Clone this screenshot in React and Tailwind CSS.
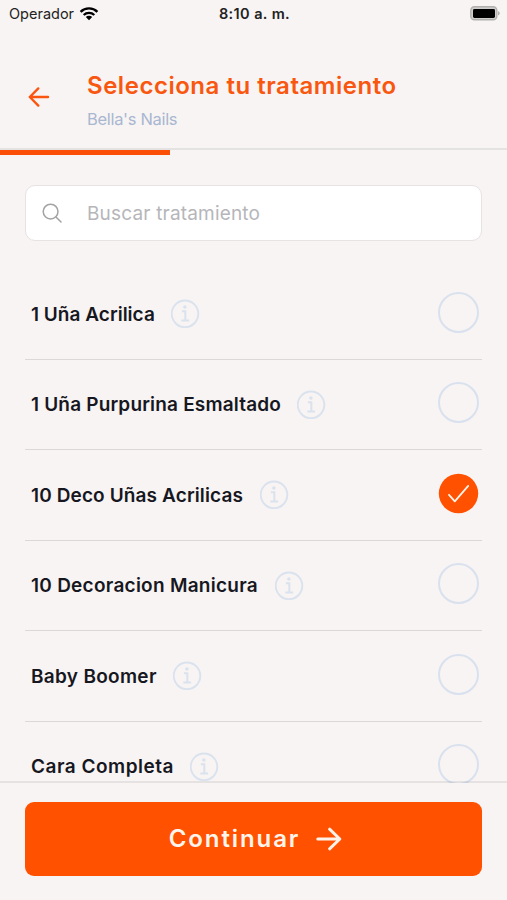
import { useState } from "react";

const TREATMENTS = [
  { name: "1 Uña Acrilica", width: "w-[124px]", tracking: "tracking-[0.02px]" },
  { name: "1 Uña Purpurina Esmaltado", width: "w-[250px]", tracking: "tracking-[0.18px]" },
  { name: "10 Deco Uñas Acrilicas", width: "w-[213px]", tracking: "tracking-[0.12px]" },
  { name: "10 Decoracion Manicura", width: "w-[228px]", tracking: "tracking-[0.26px]" },
  { name: "Baby Boomer", width: "w-[126px]", tracking: "tracking-[0.3px]" },
  { name: "Cara Completa", width: "w-[143px]", tracking: "tracking-[0.5px]" },
];

function WifiIcon() {
  return (
    <svg width="20" height="15" viewBox="0 0 20 15" aria-hidden="true" className="-mt-0.5">
      <path d="M1.6 5.8a12 12 0 0 1 16.8 0" fill="none" stroke="#000" strokeWidth="2.4" />
      <path d="M4.7 9a7.6 7.6 0 0 1 10.6 0" fill="none" stroke="#000" strokeWidth="2.3" />
      <path d="M10 14.2 6.8 11a4.6 4.6 0 0 1 6.4 0z" fill="#000" />
    </svg>
  );
}

function BatteryIcon() {
  return (
    <svg width="30" height="15" viewBox="0 0 30 15" aria-hidden="true" className="-mt-0.5">
      <rect x="0.8" y="0.8" width="26" height="13" rx="3.6" fill="#d0cecd" stroke="#b2b0af" strokeWidth="1.4" />
      <rect x="3" y="3" width="22" height="9" rx="1.4" fill="#000" />
      <path d="M28 5.2c2.3.7 2.3 3.6 0 4.3z" fill="#b2b0af" />
    </svg>
  );
}

function InfoIcon() {
  return (
    <svg width="29" height="29" viewBox="0 0 29 29" fill="none" stroke="#dae2ee" className="shrink-0" aria-hidden="true">
      <circle cx="14" cy="14.8" r="13.3" strokeWidth="1.9" />
      <path d="M10.9 12.3h3.4v9M10.3 21.5h7.8" strokeWidth="2" />
      <circle cx="13.9" cy="8" r="1.8" fill="#dae2ee" stroke="none" />
    </svg>
  );
}

function TreatmentRow({ item, selected, onSelect }) {
  return (
    <li className="flex h-[90.5px] shrink-0 items-center border-b border-[#dbd8d8] pl-1.5 pr-[3.5px]">
      <span
        className={`${item.width} ${item.tracking} pt-0.5 whitespace-nowrap text-[19px] font-semibold leading-7 text-[#17171f]`}
      >
        {item.name}
      </span>
      <span className="ml-4">
        <InfoIcon />
      </span>
      <button
        type="button"
        onClick={onSelect}
        aria-label={item.name}
        aria-pressed={selected}
        className="mb-[3px] ml-auto flex h-[41px] w-[41px] items-center justify-center"
      >
        {selected ? (
          <svg width="41" height="41" viewBox="0 0 41 41" fill="none" aria-hidden="true">
            <circle cx="20.5" cy="20.5" r="19.7" fill="#ff5100" />
            <path
              d="m11 21.8 5.8 6.5 13.4-15.4"
              stroke="#fff3e9"
              strokeWidth="1.8"
              strokeLinecap="round"
              strokeLinejoin="round"
            />
          </svg>
        ) : (
          <span className="h-[41px] w-[41px] rounded-full border-2 border-[#d9e1ee]" />
        )}
      </button>
    </li>
  );
}

export default function App() {
  const [selected, setSelected] = useState(2);

  return (
    <main className="flex h-[900px] w-[507px] flex-col overflow-hidden bg-[#f7f4f3] font-['Inter',sans-serif]">
      <div className="grid h-7 shrink-0 grid-cols-[1fr_auto_1fr] items-center pl-[9px] pr-[7px] text-[#222]">
        <div className="flex items-center gap-[5px]">
          <span className="text-[14.5px]">Operador</span>
          <WifiIcon />
        </div>
        <span className="text-[14.5px] font-semibold tracking-[0.4px]">8:10 a. m.</span>
        <div className="flex justify-end">
          <BatteryIcon />
        </div>
      </div>

      <header className="flex h-[122px] shrink-0 border-b-2 border-[#e5e3e2] pt-[42px]">
        <button type="button" aria-label="Volver" className="ml-7 mt-4 h-[22px] w-[22px]">
          <svg width="22" height="22" viewBox="0 0 22 22" fill="none" stroke="#fb560f" aria-hidden="true">
            <path
              d="M20 11H1.8M10.3 2.4 1.8 11l8.5 8.6"
              strokeWidth="2.4"
              strokeLinecap="round"
              strokeLinejoin="round"
            />
          </svg>
        </button>
        <div className="ml-[37px]">
          <h1 className="whitespace-nowrap text-[24px] font-semibold leading-8 tracking-[0.53px] text-[#f9570f]">
            Selecciona tu tratamiento
          </h1>
          <p className="pt-px text-[16.5px] leading-8 tracking-[-0.32px] text-[#a9b7d1]">Bella's Nails</p>
        </div>
      </header>
      <div className="h-[5px] w-[170px] shrink-0 bg-[#fb4e06]" />

      <div className="flex min-h-0 flex-1 flex-col overflow-hidden px-[25px] pt-[30px]">
        <label className="flex h-[56px] shrink-0 items-center rounded-[10px] border-[1.5px] border-[#e6e3e2] bg-white pl-4">
          <svg width="20" height="20" viewBox="0 0 20 20" fill="none" stroke="#a3a3a3" strokeWidth="1.5" aria-hidden="true">
            <circle cx="8.6" cy="8.6" r="7.4" />
            <path d="m14 14 5 5" strokeLinecap="round" />
          </svg>
          <input
            type="text"
            placeholder="Buscar tratamiento"
            className="ml-[25px] w-[340px] pt-0.5 text-[19px] tracking-[0.18px] outline-none placeholder:text-[#b6b6ba]"
          />
        </label>

        <ul className="mt-[28px] flex flex-col">
          {TREATMENTS.map((item, index) => (
            <TreatmentRow
              key={item.name}
              item={item}
              selected={index === selected}
              onSelect={() => setSelected(index)}
            />
          ))}
        </ul>
      </div>

      <footer className="-mt-0.5 h-[119px] shrink-0 border-t-2 border-black/7 px-[25px] pt-[19px]">
        <button
          type="button"
          className="flex h-[74px] w-full items-center justify-center gap-4 rounded-[9px] bg-[#ff5100] pl-1 text-[24px] font-semibold tracking-[1.9px] text-[#fff5ed]"
        >
          Continuar
          <svg width="26" height="24" viewBox="0 0 26 24" fill="none" aria-hidden="true">
            <path
              d="M1.8 12h22M13.6 2.2 23.8 12l-10.2 9.8"
              stroke="#fff3e9"
              strokeWidth="3"
              strokeLinecap="round"
              strokeLinejoin="round"
            />
          </svg>
        </button>
      </footer>
    </main>
  );
}
